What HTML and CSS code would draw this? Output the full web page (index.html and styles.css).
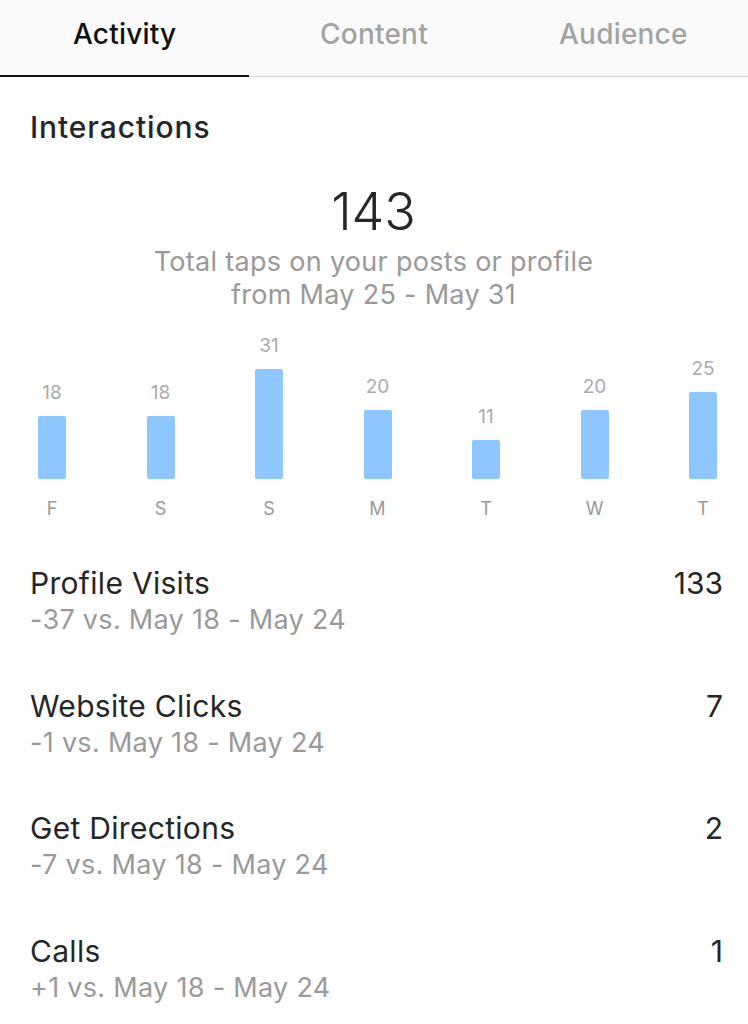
FILE: index.html
```html
<!DOCTYPE html>
<html lang="en">
<head>
    <meta charset="UTF-8">
    <meta name="viewport" content="width=device-width, initial-scale=1.0">
    <title>Insights</title>
    <link rel="stylesheet" href="styles.css">
</head>
<body>
<div class="tabs">
    <div class="tab active">Activity</div>
    <div class="tab">Content</div>
    <div class="tab">Audience</div>
</div>

<div class="section">
    <h2 class="title">Interactions</h2>
    <div class="total">
        <div class="total-num">143</div>
        <div class="total-desc">Total taps on your posts or profile<br>from May 25 - May 31</div>
    </div>

    <div class="chart">
        <div class="col"><span class="val">18</span><div class="bar" style="height: 63px"></div><span class="day">F</span></div>
        <div class="col"><span class="val">18</span><div class="bar" style="height: 63px"></div><span class="day">S</span></div>
        <div class="col"><span class="val">31</span><div class="bar" style="height: 110px"></div><span class="day">S</span></div>
        <div class="col"><span class="val">20</span><div class="bar" style="height: 69px"></div><span class="day">M</span></div>
        <div class="col"><span class="val">11</span><div class="bar" style="height: 39px"></div><span class="day">T</span></div>
        <div class="col"><span class="val">20</span><div class="bar" style="height: 69px"></div><span class="day">W</span></div>
        <div class="col"><span class="val">25</span><div class="bar" style="height: 87px"></div><span class="day">T</span></div>
    </div>

    <ul class="stats">
        <li>
            <div class="stat-text">
                <div class="stat-name">Profile Visits</div>
                <div class="stat-diff">-37 vs. May 18 - May 24</div>
            </div>
            <div class="stat-num">133</div>
        </li>
        <li>
            <div class="stat-text">
                <div class="stat-name">Website Clicks</div>
                <div class="stat-diff">-1 vs. May 18 - May 24</div>
            </div>
            <div class="stat-num">7</div>
        </li>
        <li>
            <div class="stat-text">
                <div class="stat-name">Get Directions</div>
                <div class="stat-diff">-7 vs. May 18 - May 24</div>
            </div>
            <div class="stat-num">2</div>
        </li>
        <li>
            <div class="stat-text">
                <div class="stat-name">Calls</div>
                <div class="stat-diff">+1 vs. May 18 - May 24</div>
            </div>
            <div class="stat-num">1</div>
        </li>
    </ul>
</div>
</body>
</html>
```

FILE: styles.css
```css
body {
    margin: 0;
    background: #fff;
    font-family: Inter, "Noto Sans", sans-serif;
    color: #262626;
}

.tabs {
    display: flex;
    height: 76px;
    background: #fafafa;
    border-bottom: 1px solid #d6d6d6;
}
.tab {
    flex: 1;
    display: flex;
    align-items: center;
    justify-content: center;
    padding-bottom: 8px;
    font-size: 28px;
    font-weight: 500;
    color: #a3a3a3;
    letter-spacing: 0.2px;
}
.tab.active {
    color: #111;
    border-bottom: 2px solid #111;
    margin-bottom: -1px;
    padding-bottom: 7px;
}

.section {
    padding: 0 31px 0 30px;
}
.title {
    margin: 0;
    padding-top: 32px;
    font-size: 30px;
    font-weight: 500;
    line-height: 36px;
    letter-spacing: 0.9px;
}

.total {
    text-align: center;
    margin-top: 39px;
}
.total-num {
    font-size: 52px;
    font-weight: 300;
    line-height: 56px;
}
.total-desc {
    margin-top: 5px;
    font-size: 27px;
    line-height: 33px;
    color: #999;
    font-weight: 400;
    letter-spacing: 0.3px;
}

.chart {
    display: flex;
    justify-content: space-between;
    align-items: flex-end;
    height: 209px;
    margin: 0 0 0 8px;
}
.col {
    display: flex;
    flex-direction: column;
    align-items: center;
    width: 28px;
}
.val {
    font-size: 19px;
    line-height: 22px;
    color: #aaa;
    margin-bottom: 12px;
}
.bar {
    width: 28px;
    background: #8ec6ff;
    border-radius: 2px;
}
.day {
    margin-top: 19px;
    font-size: 18px;
    line-height: 22px;
    color: #999;
}

.stats {
    list-style: none;
    margin: 45px -6px 0 0;
    padding: 0;
}
.stats li {
    display: flex;
    justify-content: space-between;
    height: 122.5px;
}
.stat-name {
    font-size: 30px;
    line-height: 36px;
    letter-spacing: 0.3px;
}
.stat-diff {
    margin-top: 1px;
    font-size: 27px;
    line-height: 36px;
    color: #999;
    letter-spacing: 0.3px;
}
.stat-num {
    font-size: 30px;
    line-height: 36px;
}
```
